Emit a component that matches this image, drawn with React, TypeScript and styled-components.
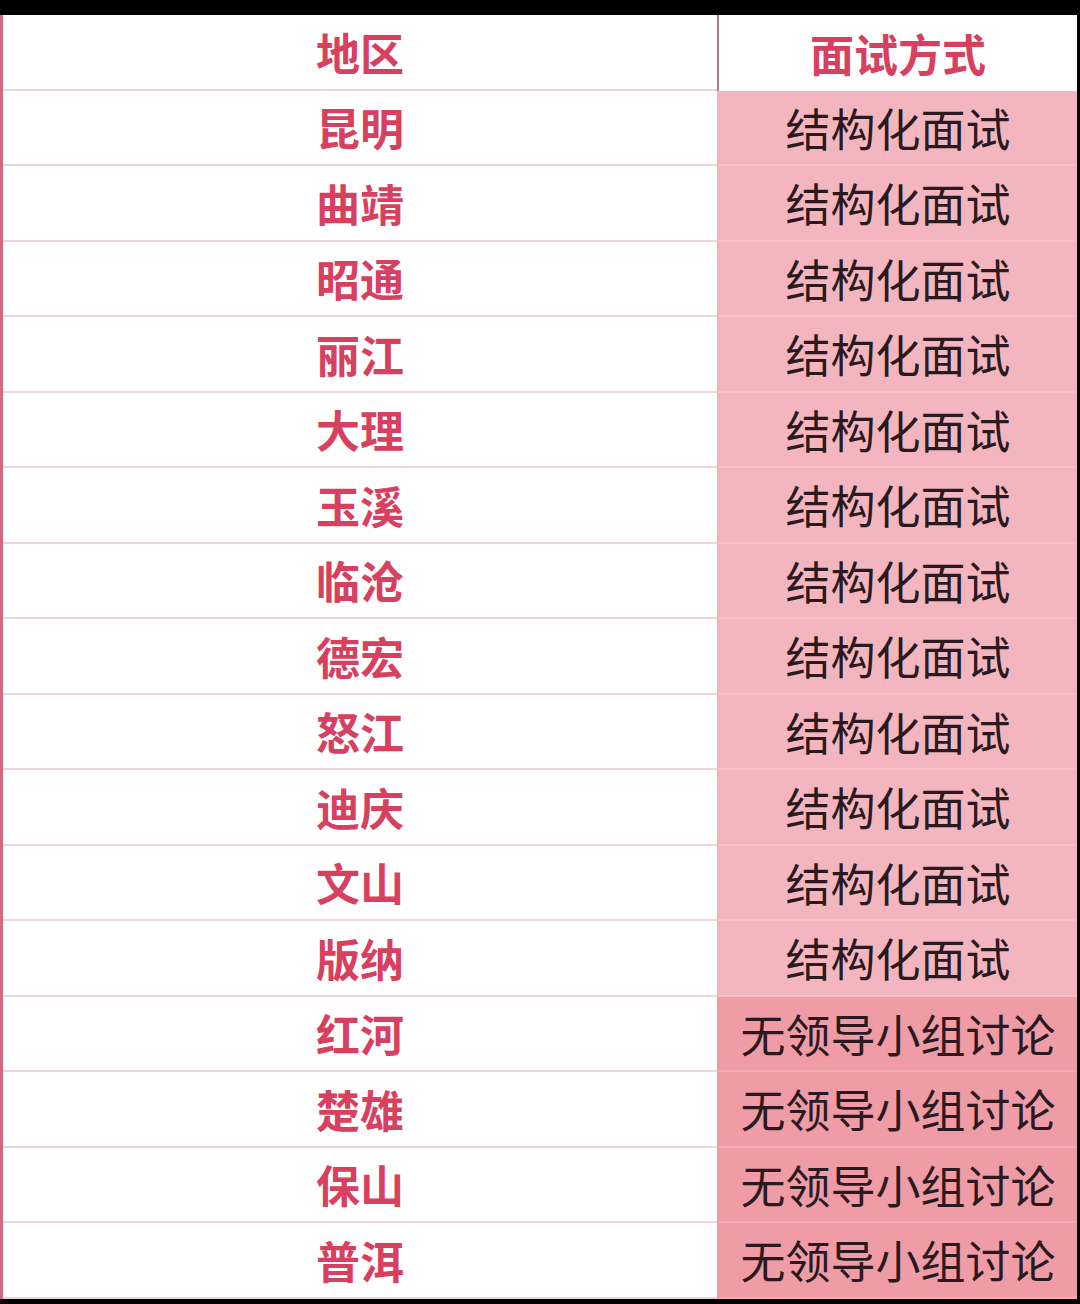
import styled, { createGlobalStyle } from 'styled-components';

const GROUP = '无领导小组讨论';
const STRUCT = '结构化面试';

const ROWS: { region: string; method: string }[] = [
  { region: '昆明', method: STRUCT },
  { region: '曲靖', method: STRUCT },
  { region: '昭通', method: STRUCT },
  { region: '丽江', method: STRUCT },
  { region: '大理', method: STRUCT },
  { region: '玉溪', method: STRUCT },
  { region: '临沧', method: STRUCT },
  { region: '德宏', method: STRUCT },
  { region: '怒江', method: STRUCT },
  { region: '迪庆', method: STRUCT },
  { region: '文山', method: STRUCT },
  { region: '版纳', method: STRUCT },
  { region: '红河', method: GROUP },
  { region: '楚雄', method: GROUP },
  { region: '保山', method: GROUP },
  { region: '普洱', method: GROUP },
];

const GlobalStyle = createGlobalStyle`
  html, body {
    margin: 0;
    padding: 0;
    background: #000;
  }
  body {
    font-family: "Noto Sans CJK SC", "Noto Sans", sans-serif;
  }
`;

export default function App(): JSX.Element {
  return (
    <>
      <GlobalStyle />
      <Screen>
        <Table>
          <Row>
            <RegionCell>地区</RegionCell>
            <HeaderCell>面试方式</HeaderCell>
          </Row>
          {ROWS.map((r) => (
            <Row key={r.region}>
              <RegionCell>{r.region}</RegionCell>
              <MethodCell $group={r.method === GROUP}>{r.method}</MethodCell>
            </Row>
          ))}
        </Table>
      </Screen>
    </>
  );
}

const Screen = styled.div`
  width: 1080px;
  height: 1304px;
  padding-top: 15px;
  box-sizing: border-box;
  background: #000;
  overflow: hidden;
`;

const Table = styled.div`
  display: flex;
  flex-direction: column;
  width: 1077px;
  background: #fff;
  border-left: 3px solid #d46a80;
  box-sizing: border-box;
`;

const Row = styled.div`
  display: grid;
  grid-template-columns: 714px 1fr;
  height: 75.5px;
`;

const Cell = styled.div`
  display: flex;
  align-items: center;
  justify-content: center;
  box-sizing: border-box;
  font-size: 44px;
  line-height: 1;
  white-space: nowrap;
`;

const RegionCell = styled(Cell)`
  color: #d7405f;
  font-weight: 700;
  border-bottom: 2px solid #ecd6da;
`;

const HeaderCell = styled(Cell)`
  color: #d7405f;
  font-weight: 700;
  background: #fff;
  border-left: 2px solid #b87a88;
`;

const MethodCell = styled(Cell)<{ $group: boolean }>`
  color: #2a1a20;
  font-weight: 400;
  font-size: 45px;
  background: ${(p) => (p.$group ? '#ef9ca7' : '#f4b6be')};
  border-left: 2px solid ${(p) => (p.$group ? '#ee98a3' : '#f3b2bb')};
  border-bottom: 2px solid ${(p) => (p.$group ? '#f3aab3' : '#f6c0c7')};
`;
